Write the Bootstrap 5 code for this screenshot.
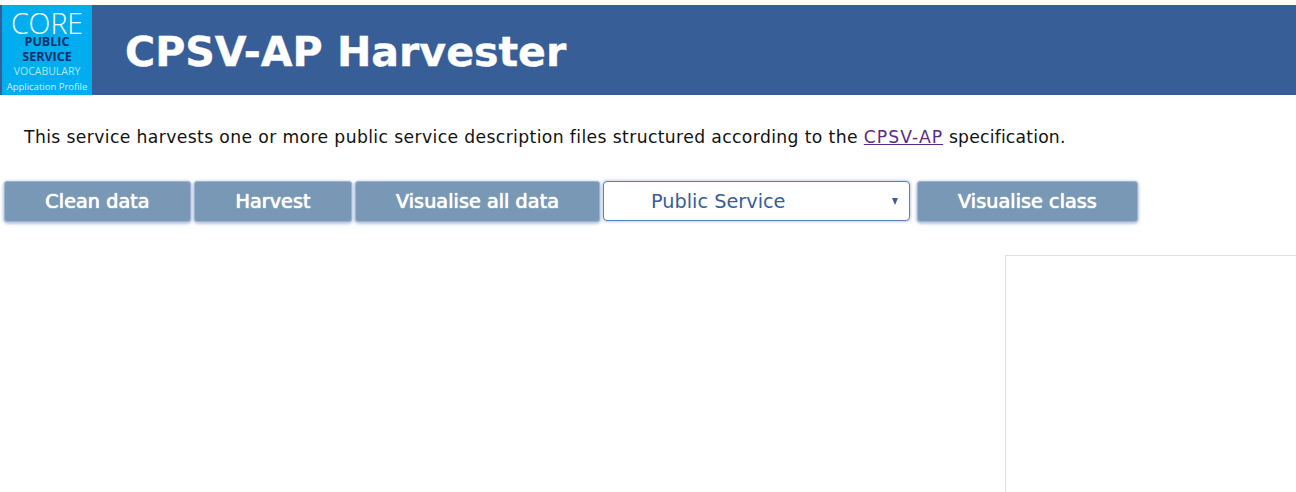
<!DOCTYPE html>
<html lang="en">
<head>
<meta charset="utf-8">
<title>CPSV-AP Harvester</title>
<link href="https://cdn.jsdelivr.net/npm/bootstrap@5.3.0/dist/css/bootstrap.min.css" rel="stylesheet">
<style>
html,body{height:492px;overflow:hidden;background:#fff}
body{font-family:"DejaVu Sans",sans-serif;padding-top:5px;color:#111}
.hv-head{height:90px;background:#375e97;padding-left:2px}
.hv-logo{width:90px;height:90px;background:#00aeef;font-family:"Open Sans",sans-serif;line-height:1;text-align:center;flex:none}
.hv-core{color:#fff;font-size:28.5px;font-weight:300;height:29px;padding-top:6px;line-height:24px}
.hv-pub{color:#0b2f6b;font-size:12.5px;font-weight:700;line-height:15px}
.hv-voc{color:#b5e4f8;font-size:10.5px;line-height:12px;margin-top:1px}
.hv-app{color:#d4f0fb;font-size:9.5px;line-height:12px;margin-top:4px}
.hv-title{color:#fff;font-size:41.1px;font-weight:700;margin:0 0 0 33px;padding-top:6px;line-height:1;font-family:"DejaVu Sans",sans-serif;-webkit-text-stroke:.4px #fff}
.hv-intro{font-size:17.2px;letter-spacing:.38px;margin:30px 0 0 24px;line-height:24px;white-space:nowrap}
.hv-intro a{color:#5b2a86;letter-spacing:1.05px}
.hv-spec{letter-spacing:.2px}
.hv-bar{margin:31px 0 0 2px;gap:1px;height:42px}
.hv-btn{height:41px;background:#7998b5;color:#fff;font-size:19.3px;font-weight:400;border:0;border-radius:4px;padding:2px 0 0;box-shadow:inset 0 0 0 1px #9db3d4,0 1px 3px 1px #b4c5e0;text-shadow:0 0 1px #fff,0 0 1px #fff}
.hv-w1{width:187px;margin-left:2px}
.hv-w2{width:158px;margin-left:2px}
.hv-w3{width:245px;margin-left:2px}
.hv-w4{width:221px;margin-left:6px}
.hv-sel{width:307px;height:40px;margin-left:2px;border:1px solid #5a82b8;border-radius:4px;box-shadow:0 0 3px 1px #c0cfe4;color:#375e97;font-size:19.3px;padding:3px 11px 0 47px;background:#fff}
.hv-caret{width:0;height:0;margin-top:-3px;border-left:3.5px solid transparent;border-right:3.5px solid transparent;border-top:7px solid #375e97}
.hv-panel{margin:33px 0 0 1005px;height:237px;border:1px solid #e0e0e0;border-right:0;border-bottom:0}
</style>
</head>
<body>
<header class="hv-head d-flex align-items-center">
  <div class="hv-logo">
    <div class="hv-core">CORE</div>
    <div class="hv-pub">PUBLIC</div>
    <div class="hv-pub">SERVICE</div>
    <div class="hv-voc">VOCABULARY</div>
    <div class="hv-app">Application Profile</div>
  </div>
  <h1 class="hv-title">CPSV-AP Harvester</h1>
</header>
<p class="hv-intro">This service harvests one or more public service description files structured according to the <a href="#">CPSV-AP</a> <span class="hv-spec">specification.</span></p>
<div class="hv-bar d-flex align-items-center">
  <button class="hv-btn hv-w1" type="button">Clean data</button>
  <button class="hv-btn hv-w2" type="button">Harvest</button>
  <button class="hv-btn hv-w3" type="button">Visualise all data</button>
  <div class="hv-sel d-flex align-items-center justify-content-between"><span>Public Service</span><span class="hv-caret"></span></div>
  <button class="hv-btn hv-w4" type="button">Visualise class</button>
</div>
<div class="hv-panel"></div>
<script src="https://cdn.jsdelivr.net/npm/bootstrap@5.3.0/dist/js/bootstrap.bundle.min.js"></script>
</body>
</html>
